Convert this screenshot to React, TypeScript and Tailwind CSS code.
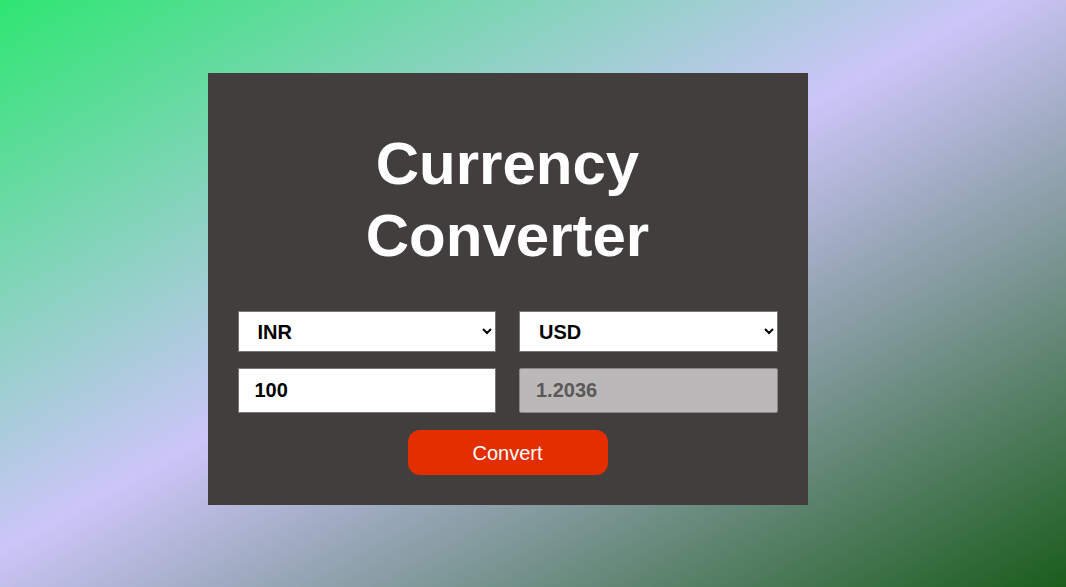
import React, { useState } from 'react';

const rates: Record<string, number> = {
  INR: 1,
  USD: 0.012036,
  EUR: 0.011,
  GBP: 0.0095,
  JPY: 1.78,
};

export default function App() {
  const [from, setFrom] = useState('INR');
  const [to, setTo] = useState('USD');
  const [amount, setAmount] = useState('100');
  const [result, setResult] = useState('1.2036');

  const convert = () => {
    const value = parseFloat(amount);
    if (isNaN(value)) return;
    const out = (value / rates[from]) * rates[to];
    setResult(out.toFixed(4));
  };

  return (
    <div className="min-h-screen w-full flex items-start justify-center pr-[51px] bg-[linear-gradient(to_bottom_right,#2ee672_0%,#ccc5f8_47%,#1a5d1c_100%)] font-['Liberation_Sans',Arial,sans-serif]">
      <div className="mt-[73px] w-[600px] shrink-0 bg-[#433e3e] px-[30px] pt-[55px] pb-[30px]">
        <h1 className="text-center text-white font-bold text-[60px] leading-[72px]">
          Currency
          <br />
          Converter
        </h1>

        <div className="mt-[39px] grid grid-cols-2 gap-x-[23px] gap-y-[16px]">
          <select
            value={from}
            onChange={(e) => setFrom(e.target.value)}
            className="h-[41px] bg-white border border-[#767676] pl-[15px] pr-2 text-[20px] font-bold text-black outline-none"
          >
            {Object.keys(rates).map((c) => (
              <option key={c} value={c}>{c}</option>
            ))}
          </select>
          <select
            value={to}
            onChange={(e) => setTo(e.target.value)}
            className="h-[41px] bg-white border border-[#767676] pl-[15px] pr-2 text-[20px] font-bold text-black outline-none"
          >
            {Object.keys(rates).map((c) => (
              <option key={c} value={c}>{c}</option>
            ))}
          </select>
          <input
            type="text"
            value={amount}
            onChange={(e) => setAmount(e.target.value)}
            className="h-[45px] bg-white border border-[#767676] px-[16px] text-[20px] font-bold text-black outline-none"
          />
          <input
            type="text"
            value={result}
            disabled
            className="h-[45px] bg-[#bab8b8] border border-[#8a8787] rounded-[2px] px-[16px] text-[20px] font-bold text-[#5b5858] outline-none"
          />
        </div>

        <div className="mt-[17px] flex justify-center">
          <button
            onClick={convert}
            className="w-[200px] h-[45px] rounded-[12px] bg-[#e32f00] text-white text-[20px]"
          >
            Convert
          </button>
        </div>
      </div>
    </div>
  );
}
